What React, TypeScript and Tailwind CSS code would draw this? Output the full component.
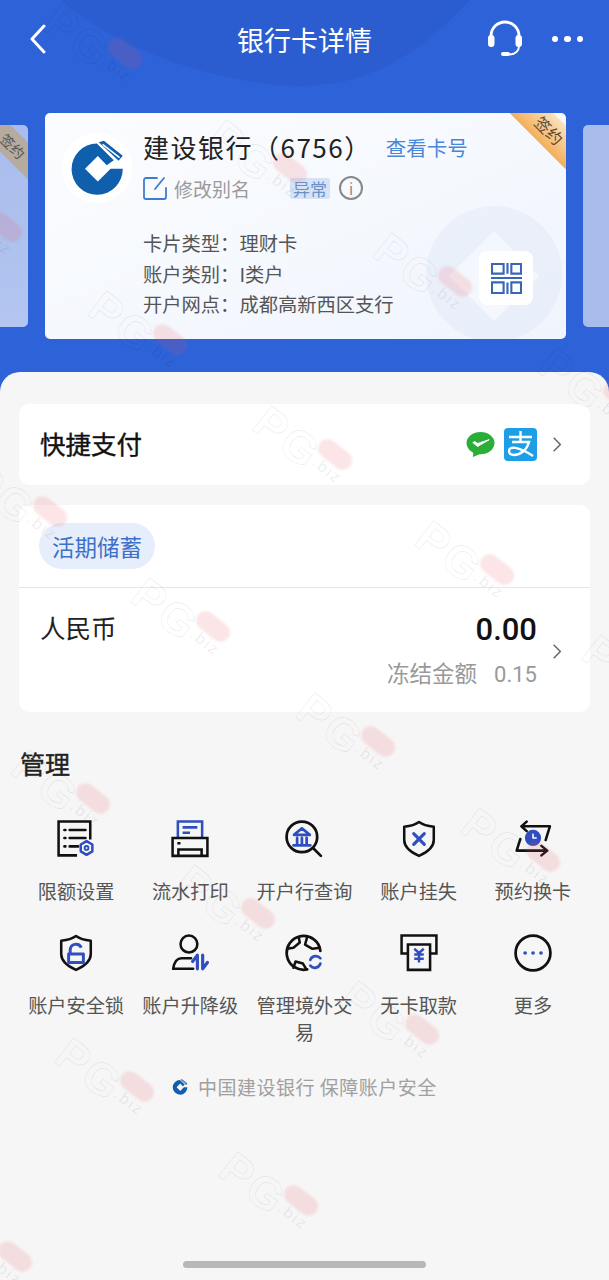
import type { ReactNode } from 'react'

const BLUE = '#2f4fc0'
const INK = '#111111'

// x, y is the centre of the red pill
function Watermark({ x, y }: { x: number; y: number }) {
  return (
    <div
      className="pointer-events-none absolute z-30 size-0 origin-top-left rotate-[38deg]"
      style={{ left: x - 65, top: y - 50 }}
    >
      <span className="absolute left-0 top-[-6px] whitespace-nowrap text-[45px] font-bold leading-none tracking-[3px] text-transparent [-webkit-text-stroke:1px_#00000012] [font-family:'Liberation_Sans',sans-serif]">
        PG
      </span>
      <span className="absolute left-[64px] top-[-9px] h-[19px] w-[38px] rounded-full bg-[#e8525a26] blur-[1px]" />
      <span className="absolute left-[70px] top-[10px] whitespace-nowrap text-[16px] leading-none tracking-[2px] text-[#00000014] [font-family:'Liberation_Sans',sans-serif]">
        .biz
      </span>
    </div>
  )
}

function Svg({ children }: { children: ReactNode }) {
  return (
    <svg viewBox="0 0 36 36" width="38" height="38" fill="none" stroke={INK} strokeWidth="2.4" strokeLinejoin="round" strokeLinecap="round">
      {children}
    </svg>
  )
}

const icons: Record<string, ReactNode> = {
  limit: (
    <Svg>
      <path d="M19 33.500H1.500V1.500h30v17" strokeLinecap="butt" strokeLinejoin="miter" />
      <path d="M7 9.500h1M12 9.500h15M7 17h1M12 17h15M7 25h1M12 25h8" />
      <path d="M28 20l5.500 3.200v6.500L28 33l-5.500-3.300v-6.500z" stroke={BLUE} strokeWidth="2.400" />
      <circle cx="28" cy="26.500" r="1.800" stroke={BLUE} strokeWidth="1.800" />
    </Svg>
  ),
  print: (
    <Svg>
      <path d="M6.500 17V1.500h23V17" stroke={BLUE} strokeLinecap="butt" strokeLinejoin="miter" />
      <path d="M11 7h14M11 12h7" stroke={BLUE} strokeLinecap="butt" />
      <path d="M1.500 17h33v17h-33zM7 34v-6h22v6M6 22h3" strokeLinecap="butt" strokeLinejoin="miter" />
    </Svg>
  ),
  bank: (
    <Svg>
      <circle cx="16" cy="16" r="14.500" strokeWidth="2.600" />
      <path d="M27 27l7 7" strokeWidth="2.600" />
      <path d="M8.500 14l7.500-6 7.500 6zM11.500 17v6M16 17v6M20.500 17v6M8 24h16" stroke={BLUE} strokeWidth="2.600" />
    </Svg>
  ),
  lost: (
    <Svg>
      <path d="M18 2c4 3 9 4 14 4.500V19c0 7-7 12-14 15C11 31 4 26 4 19V6.500C9 6 14 5 18 2z" />
      <path d="M13 13l10 10M23 13L13 23" stroke={BLUE} strokeWidth="3" />
    </Svg>
  ),
  swap: (
    <Svg>
      <path d="M12 1.500L7 6l5 4.500M7 6h27l-4 13M6 18L2.500 29H31M26 24.500l5.500 4.500-5.500 4.500" />
      <circle cx="18" cy="17" r="6.500" fill={BLUE} stroke={BLUE} />
      <path d="M18 13.500V17h3" stroke="#fff" strokeWidth="1.500" />
    </Svg>
  ),
  lock: (
    <Svg>
      <path d="M18 2c4 3 9 4 14 4.500V19c0 7-7 12-14 15C11 31 4 26 4 19V6.500C9 6 14 5 18 2z" />
      <path d="M11 19h14v8H11zM12.500 19v-4a5.500 5.500 0 0 1 10.500-2" stroke={BLUE} strokeWidth="2.800" strokeLinecap="butt" />
    </Svg>
  ),
  user: (
    <Svg>
      <circle cx="17" cy="9.500" r="8" />
      <path d="M19 23H10c-4 0-7 4-8 10h19" />
      <path d="M25 33V20l-4.500 6M30 20v13l4.500-6" stroke={BLUE} strokeWidth="3" />
    </Svg>
  ),
  globe: (
    <Svg>
      <path d="M21 33.500A16 16 0 1 1 33.500 16" strokeWidth="2.600" />
      <path d="M13 3l1 5-6 5-6 1M8 32l2-6 7 2 3 5M21 3l-2 7 7 4 7-1" />
      <path d="M24 24.500a5.500 5.500 0 0 1 9.500-1.500M33.500 28a5.500 5.500 0 0 1-9.500 2" stroke={BLUE} strokeWidth="2.600" />
    </Svg>
  ),
  atm: (
    <Svg>
      <path d="M7 18.500H1.500v-17h33v17H29" strokeLinecap="butt" strokeLinejoin="miter" />
      <path d="M7.500 10h21v24h-21z" strokeLinecap="butt" strokeLinejoin="miter" />
      <path d="M13.500 14l4.500 4 4.500-4M18 18v9M13.500 19.500h9M13.500 23.500h9" stroke={BLUE} strokeWidth="2.300" strokeLinecap="butt" />
    </Svg>
  ),
  more: (
    <Svg>
      <circle cx="18" cy="18" r="16.500" strokeWidth="2.600" />
      <path d="M10.500 18h.100M18 18h.100M25.500 18h.100" stroke={BLUE} strokeWidth="3.400" />
    </Svg>
  ),
}

const actions = [
  ['限额设置', 'limit'],
  ['流水打印', 'print'],
  ['开户行查询', 'bank'],
  ['账户挂失', 'lost'],
  ['预约换卡', 'swap'],
  ['账户安全锁', 'lock'],
  ['账户升降级', 'user'],
  ['管理境外交易', 'globe'],
  ['无卡取款', 'atm'],
  ['更多', 'more'],
]

const marks = [
  [125, 52], [290, 167], [455, 280], [620, 395], [5, 225], [170, 338], [335, 453], [497, 568],
  [50, 510], [213, 625], [378, 740], [543, 855], [93, 797], [258, 912], [422, 1028], [137, 1085],
  [301, 1199], [15, 1255], [664, 682],
]

function Chevron({ className = '' }: { className?: string }) {
  return (
    <svg viewBox="0 0 12 20" width="10" height="17" fill="none" stroke="#666" strokeWidth="1.800" className={className}>
      <path d="M2 2l8 8-8 8" />
    </svg>
  )
}

function CcbLogo({ size }: { size: number }) {
  return (
    <svg viewBox="30 35 165 175" width={size} height={size}>
      <path d="M112 46L165 98L143 114L115 85L75 125L115 165L155 125H193A80 80 0 1 1 112 46Z" fill="#0f5fad" />
      <path d="M118 42L134 37L193 84L180 100Z" fill="#0f5fad" />
      <path d="M130 49L183 90" stroke="#fff" strokeWidth="5" fill="none" />
    </svg>
  )
}

export default function App() {
  return (
    <div className="relative h-[1280px] w-[609px] overflow-hidden bg-[#f6f6f6] font-['Noto_Sans_CJK_SC','Noto_Sans',sans-serif]">
      {/* blue header area */}
      <div className="relative h-[392px] bg-[#2e62d8]">
        <svg className="absolute inset-0" width="609" height="392" fill="none">
          <path d="M60 0C130 60 240 86 300 86C390 86 440 30 470 0z" fill="#2c5dd0" />
        </svg>

        <div className="relative flex h-[78px] items-center justify-between pl-[29px] pr-[26px]">
          <svg viewBox="0 0 18 30" width="18" height="30" fill="none" stroke="#fff" strokeWidth="3" strokeLinecap="round" strokeLinejoin="round">
            <path d="M15 2L3 15l12 13" />
          </svg>
          <div className="absolute left-0 right-0 text-center text-[27px] leading-none text-white">银行卡详情</div>
          <div className="flex items-center gap-[28px]">
            <svg viewBox="0 0 36 38" width="38" height="38" fill="none" stroke="#fff" strokeWidth="2.800" strokeLinecap="round">
              <path d="M4 20v-4a14 14 0 0 1 28 0v4" />
              <rect x="1" y="15" width="6.500" height="12" rx="3.200" fill="#fff" stroke="none" />
              <rect x="28.500" y="15" width="6.500" height="12" rx="3.200" fill="#fff" stroke="none" />
              <path d="M32 26c0 5-4 8-9 8.500" strokeWidth="2" />
              <rect x="14" y="32" width="9" height="4" rx="2" fill="#fff" stroke="none" />
            </svg>
            <div className="flex gap-[6px]">
              <span className="size-[6.500px] rounded-full bg-white" />
              <span className="size-[6.500px] rounded-full bg-white" />
              <span className="size-[6.500px] rounded-full bg-white" />
            </div>
          </div>
        </div>

        {/* card carousel */}
        <div className="relative mt-[35px] flex items-center gap-[17px]">
          <div className="relative h-[202px] w-[28px] shrink-0 overflow-hidden rounded-r-[5px] bg-gradient-to-b from-[#a9bcec] to-[#b3c5f0]">
            <div className="absolute right-[-30px] top-[8px] w-[90px] rotate-45 bg-[#b5ab9f] text-center text-[14px] leading-[26px] text-[#555]">签约</div>
          </div>

          <div className="relative h-[226px] w-[521px] shrink-0 overflow-hidden rounded-[5px] bg-gradient-to-br from-[#fbfcfe] to-[#f0f5fd] pl-[17px] pr-[16px] pt-[20px]">
            <svg className="absolute bottom-0 right-0" width="150" height="150" viewBox="0 0 150 150" fill="none">
              <circle cx="78" cy="85" r="68" fill="#e4ebf9" fillOpacity="0.6" />
              <path d="M78 42l45 45-45 45-45-45z" fill="#f4f7fd" />
            </svg>
            <div className="absolute right-[-33px] top-[2px] w-[100px] rotate-45 bg-gradient-to-b from-[#f9e3bc] to-[#f2ae58] text-center text-[16px] leading-[31px] text-[#5b4630]">签约</div>

            <div className="relative flex items-start">
              <div className="flex size-[70px] shrink-0 items-center justify-center rounded-full bg-white">
                <CcbLogo size={56} />
              </div>
              <div className="ml-[11px] mt-[-4px]">
                <div className="flex items-center">
                  <span className="text-[26px] leading-[36px] tracking-[1.500px] text-[#222]">建设银行（6756）</span>
                  <span className="ml-[14px] text-[20.500px] leading-[36px] text-[#4a87d8]">查看卡号</span>
                </div>
                <div className="mt-[11px] flex items-center">
                  <svg viewBox="0 0 24 24" width="24" height="24" fill="none" stroke="#3f7bd2" strokeWidth="1.800" strokeLinecap="round">
                    <path d="M14 2H3a2 2 0 0 0-2 2v17a2 2 0 0 0 2 2h18a2 2 0 0 0 2-2V12M21 2l-9 11" />
                  </svg>
                  <span className="ml-[7px] text-[19px] leading-none text-[#9a9a9a]">修改别名</span>
                  <span className="ml-[40px] rounded-[2px] bg-[#d6e3f6] px-[3px] text-[17px] leading-[21px] text-[#6a92c8]">异常</span>
                  <span className="ml-[9px] flex size-[24px] items-center justify-center rounded-full border-2 border-[#888] text-[15px] leading-none text-[#888]">i</span>
                </div>
              </div>
            </div>

            <div className="relative ml-[81px] mt-[25px] text-[19.300px] leading-[30.500px] text-[#555]">
              <div>卡片类型：理财卡</div>
              <div>账户类别：I类户</div>
              <div>开户网点：成都高新西区支行</div>
            </div>

            <div className="absolute bottom-[34px] right-[33px] flex size-[54px] items-center justify-center rounded-[8px] bg-white">
              <svg viewBox="0 0 32 32" width="31" height="31" fill="none" stroke="#3a66b8" strokeWidth="2.200">
                <path d="M1 1h12v10H1zM1 20h12v11H1zM21 1h10v10H21zM21 20h10v11H21zM0 15.500h32M17 0v11M17 20v12" />
              </svg>
            </div>
          </div>

          <div className="h-[202px] w-[26px] shrink-0 rounded-l-[5px] bg-[#a9bcec]" />
        </div>
      </div>

      {/* content sheet */}
      <div className="absolute inset-x-0 top-[372px] rounded-t-[20px] bg-[#f6f6f6] px-[19px] pt-[32px]">
        <div className="flex h-[81px] items-center justify-between rounded-[10px] bg-white pl-[21px] pr-[28px]">
          <span className="mt-[-3px] text-[25.500px] leading-none text-[#111] [-webkit-text-stroke:0.4px_#111]">快捷支付</span>
          <div className="flex items-center">
            <svg viewBox="0 0 30 28" width="29" height="27">
              <ellipse cx="15" cy="12.500" rx="14.500" ry="11.500" fill="#2aae38" />
              <path d="M7 27l1-7 6 4z" fill="#2aae38" />
              <path d="M7 12l5 4 12-7-12 4-3-2z" fill="#fff" stroke="#fff" strokeWidth="1" />
            </svg>
            <svg viewBox="0 0 33 33" width="33" height="33" className="ml-[9px]">
              <rect width="33" height="33" rx="4" fill="#1c9fe6" />
              <path d="M5 9h23M16.500 3v11M8 14h17c-2 8-9 13-15 13-3 0-5-1-5-4 0-5 9-5 24 5" fill="none" stroke="#fff" strokeWidth="2.400" />
            </svg>
            <Chevron className="ml-[15px]" />
          </div>
        </div>

        <div className="mt-[20px] h-[207px] rounded-[10px] bg-white">
          <div className="h-[83px] border-b border-[#e6e6e6] pl-[20px] pt-[18px]">
            <span className="inline-block rounded-full bg-[#e6eefb] px-[13px] text-[22.500px] leading-[46px] text-[#3f70c9]">活期储蓄</span>
          </div>
          <div className="flex items-start justify-between pl-[21px] pr-[28px] pt-[24px]">
            <span className="mt-[-3px] text-[25.500px] leading-[36px] text-[#222]">人民币</span>
            <div className="flex items-center">
              <div className="text-right">
                <div className="text-[31px] font-medium leading-[36px] text-[#111] font-['Roboto',sans-serif]">0.00</div>
                <div className="mt-[8px] text-[22.500px] leading-[32px] text-[#999]">
                  冻结金额
                  <span className="ml-[17px] text-[22px] font-['Roboto',sans-serif]">0.15</span>
                </div>
              </div>
              <Chevron className="ml-[15px]" />
            </div>
          </div>
        </div>

        <div className="mt-[33px] pl-[1px] text-[25px] leading-[36px] text-[#222] [-webkit-text-stroke:0.4px_#222]">管理</div>

        <div className="mt-[39px] grid grid-cols-5">
          {actions.map(([label, icon]) => (
            <div key={label} className="flex h-[114px] flex-col items-center">
              {icons[icon]}
              <div className="mt-[20px] w-[100px] text-center text-[19.200px] leading-[27px] text-[#555]">{label}</div>
            </div>
          ))}
        </div>

        <div className="mt-[25px] flex items-center justify-center">
          <CcbLogo size={16} />
          <span className="ml-[10px] text-[19px] leading-[27px] tracking-[0.500px] text-[#a0a0a0]">中国建设银行 保障账户安全</span>
        </div>
      </div>

      <div className="absolute bottom-[12px] left-[183px] h-[7px] w-[243px] rounded-full bg-[#b8b8b8]" />

      {marks.map(([x, y]) => (
        <Watermark key={`${x}-${y}`} x={x} y={y} />
      ))}
    </div>
  )
}
